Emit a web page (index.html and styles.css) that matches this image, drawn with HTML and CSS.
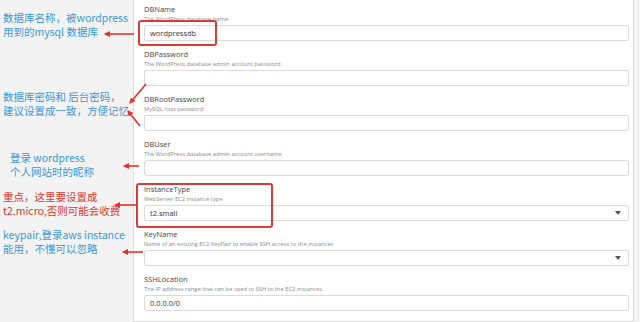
FILE: index.html
```html
<!DOCTYPE html>
<html lang="zh-CN">
<head>
<meta charset="UTF-8">
<meta name="viewport" content="width=device-width, initial-scale=1.0">
<title>Stack parameters</title>
<link rel="stylesheet" href="styles.css">
</head>
<body>

  <div class="page">
    <!-- 左侧说明 -->
    <aside class="notes">
      <p class="note blue note-name">数据库名称，被wordpress<br>用到的mysql 数据库</p>
      <p class="note blue note-pass">数据库密码和 后台密码，<br>建议设置成一致，方便记忆</p>
      <p class="note blue note-user">登录 wordpress<br>个人网站时的昵称</p>
      <p class="note red note-type">重点，这里要设置成<br>t2.micro,否则可能会收费</p>
      <p class="note blue note-key">keypair,登录aws instance<br>能用，不懂可以忽略</p>
    </aside>

    <!-- 参数表单 -->
    <main class="panel">
      <div class="field">
        <div class="label">DBName</div>
        <div class="desc">The WordPress database name</div>
        <div class="input">wordpressdb</div>
      </div>
      <div class="field">
        <div class="label">DBPassword</div>
        <div class="desc">The WordPress database admin account password</div>
        <div class="input"></div>
      </div>
      <div class="field">
        <div class="label">DBRootPassword</div>
        <div class="desc">MySQL root password</div>
        <div class="input"></div>
      </div>
      <div class="field">
        <div class="label">DBUser</div>
        <div class="desc">The WordPress database admin account username</div>
        <div class="input"></div>
      </div>
      <div class="field">
        <div class="label">InstanceType</div>
        <div class="desc">WebServer EC2 instance type</div>
        <div class="input select">t2.small<span class="caret"></span></div>
      </div>
      <div class="field">
        <div class="label">KeyName</div>
        <div class="desc">Name of an existing EC2 KeyPair to enable SSH access to the instances</div>
        <div class="input select"><span></span><span class="caret"></span></div>
      </div>
      <div class="field">
        <div class="label">SSHLocation</div>
        <div class="desc">The IP address range that can be used to SSH to the EC2 instances</div>
        <div class="input">0.0.0.0/0</div>
      </div>
    </main>
  </div>

  <!-- 红色标注：方框和箭头 -->
  <svg class="marks" width="640" height="322" viewBox="0 0 640 322">
    <defs>
      <marker id="head" markerWidth="6" markerHeight="6" refX="5" refY="3" orient="auto" markerUnits="userSpaceOnUse">
        <path d="M0,0 L6,3 L0,6 Z" fill="#e2322b"/>
      </marker>
    </defs>
    <rect x="139" y="21" width="77" height="24" rx="2" fill="none" stroke="#d93a3a" stroke-width="2"/>
    <rect x="137" y="184" width="135" height="43" rx="2" fill="none" stroke="#d93a3a" stroke-width="2"/>
    <g stroke="#e2322b" stroke-width="1.6" fill="none" marker-end="url(#head)">
      <line x1="134" y1="34" x2="105" y2="34"/>
      <line x1="146" y1="84" x2="130" y2="103"/>
      <line x1="140" y1="126" x2="128" y2="111"/>
      <line x1="139" y1="166" x2="124" y2="166"/>
      <line x1="136" y1="205" x2="115" y2="205"/>
      <line x1="143" y1="252" x2="123" y2="252"/>
    </g>
  </svg>

</body>
</html>
```

FILE: styles.css
```css
body {
  margin: 0;
  background: #f3f3f3;
  font-family: "Open Sans", "Noto Sans", sans-serif;
  position: relative;
  overflow: hidden;
}

.page {
  display: flex;
  height: 322px;
}

/* 左侧说明 */
.notes {
  width: 133px;
  flex: none;
}

.note {
  margin: 0;
  padding-left: 3px;
  font-family: "Noto Sans CJK SC", sans-serif;
  font-size: 10.5px;
  line-height: 13.5px;
  white-space: nowrap;
}
.blue {
  color: #3a97dc;
}
.red {
  color: #e0362c;
}
.note-name {
  margin-top: 11px;
}
.note-pass {
  margin-top: 52px;
}
.note-user {
  margin-top: 34px;
  padding-left: 10px;
}
.note-type {
  margin-top: 12px;
}
.note-key {
  margin-top: 11px;
}

/* 参数表单 */
.panel {
  width: 501px;
  height: 322px;
  box-sizing: border-box;
  background: #fff;
  border-left: 1px solid #dedede;
  border-right: 1px solid #dedede;
  border-bottom: 1px solid #d6d6d6;
  padding: 4px 4px 10px 10px;
}

.field {
  margin-bottom: 8px;
}
.field:last-child {
  margin-bottom: 0;
}

.label {
  font-size: 7.5px;
  line-height: 11px;
  color: #444;
}

.desc {
  font-size: 5.8px;
  line-height: 9px;
  color: #8a8a8a;
}

.input {
  margin-top: 1px;
  height: 16px;
  box-sizing: border-box;
  border: 1px solid #dadada;
  border-radius: 2px;
  padding: 0 5px;
  display: flex;
  align-items: center;
  font-size: 7.5px;
  color: #333;
}

.select {
  justify-content: space-between;
  padding-right: 7px;
}

.caret {
  width: 0;
  height: 0;
  border-left: 3px solid transparent;
  border-right: 3px solid transparent;
  border-top: 4px solid #555;
}

/* 标注层 */
.marks {
  position: absolute;
  top: 0;
  left: 0;
  pointer-events: none;
}
```
